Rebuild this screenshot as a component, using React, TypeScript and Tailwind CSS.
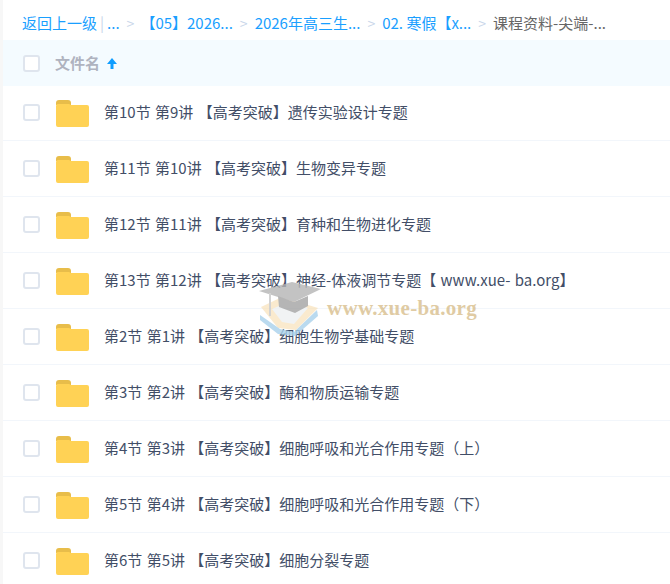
const files = [
  '第10节 第9讲 【高考突破】遗传实验设计专题',
  '第11节 第10讲 【高考突破】生物变异专题',
  '第12节 第11讲 【高考突破】育种和生物进化专题',
  '第13节 第12讲 【高考突破】神经-体液调节专题【 www.xue- ba.org】',
  '第2节 第1讲 【高考突破】细胞生物学基础专题',
  '第3节 第2讲 【高考突破】酶和物质运输专题',
  '第4节 第3讲 【高考突破】细胞呼吸和光合作用专题（上）',
  '第5节 第4讲 【高考突破】细胞呼吸和光合作用专题（下）',
  '第6节 第5讲 【高考突破】细胞分裂专题',
]

const crumbs = ['【05】2026...', '2026年高三生...', '02. 寒假【x...']

const Checkbox = () => (
  <span className="block w-[17px] h-[17px] rounded-[3px] border-2 border-[#dfe5ee] bg-white shrink-0" />
)

const Folder = () => (
  <svg width="33" height="27" viewBox="0 0 33 27" className="shrink-0">
    <path d="M0 3a3 3 0 0 1 3-3h9a3 3 0 0 1 3 3v2H0z" fill="#e8bd4a" />
    <path d="M0 6a2 2 0 0 1 2-2h11l2 1h16a2 2 0 0 1 2 2v18a2 2 0 0 1-2 2H2a2 2 0 0 1-2-2z" fill="#ffd255" />
  </svg>
)

const Sep = () => <span className="text-[#c9d6ea] mx-[7px] text-[14px]">&gt;</span>

const Watermark = () => (
  <div className="absolute left-[258px] top-[278px] flex items-center opacity-80 pointer-events-none">
    <svg width="70" height="62" viewBox="0 0 70 62">
      <path d="M3 29 L24 19 L60 30 L38 52 L20 50 Z" fill="#f8deae" opacity="0.75" />
      <path d="M2 37 L22 51 L36 54 L59 32 L60 38 L37 58 L20 56 L2 42 Z" fill="#a9d2ec" />
      <path d="M14 31 L30 24 L50 30 L36 46 L24 44 Z" fill="#eef1f2" />
      <path d="M1 13 L34 4 L63 11 L36 24 Z" fill="#b5b5b5" />
      <path d="M20 18 L36 24 L50 18 L50 28 L37 35 L21 29 Z" fill="#a3a3a3" />
      <path d="M12 15 L12 38" stroke="#c8c8c8" strokeWidth="2" />
    </svg>
    <span className="ml-[-1px] mt-[-1px] font-['Liberation_Serif',serif] font-bold text-[21px] tracking-[0.3px] text-[#d9bf8e] leading-none">www.xue-ba.org</span>
  </div>
)

export default function App() {
  return (
    <div className="relative w-[670px] h-[584px] overflow-hidden bg-white pl-[3px] font-['Noto_Sans_CJK_SC',sans-serif] text-[15px]">
      <div className="absolute left-0 top-0 bottom-0 w-[3px] bg-[#f7f7f7]" />
      <div className="h-[40px] pl-[19px] pt-[6px] flex items-center whitespace-nowrap text-[#1a9fff]">
        <span>返回上一级</span>
        <span className="text-[#c9d6ea] mx-[3px]">|</span>
        <span>...</span>
        <Sep />
        <span className="ml-[-1px]">{crumbs[0]}</span>
        <Sep />
        <span>{crumbs[1]}</span>
        <Sep />
        <span>{crumbs[2]}</span>
        <Sep />
        <span className="text-[#666]">课程资料-尖端-...</span>
      </div>
      <div className="h-[46px] bg-[#f4fbff] pl-[20px] flex items-center">
        <Checkbox />
        <span className="ml-[15px] font-bold text-[#afb3bf]">文件名</span>
        <svg width="12" height="13" viewBox="0 0 12 13" className="ml-[6px]">
          <path d="M6 1 L11 7 H7.5 V12 H4.5 V7 H1 Z" fill="#0f9dff" />
        </svg>
      </div>
      <div className="-mt-px">
        {files.map((name) => (
          <div key={name} className="h-[56px] pl-[20px] flex items-center border-b border-[#f2f6fb] whitespace-nowrap">
            <Checkbox />
            <div className="ml-[16px] mt-[2px]"><Folder /></div>
            <span className="ml-[15px] text-[#424e67] [word-spacing:1px]">{name}</span>
          </div>
        ))}
      </div>
      <Watermark />
    </div>
  )
}
